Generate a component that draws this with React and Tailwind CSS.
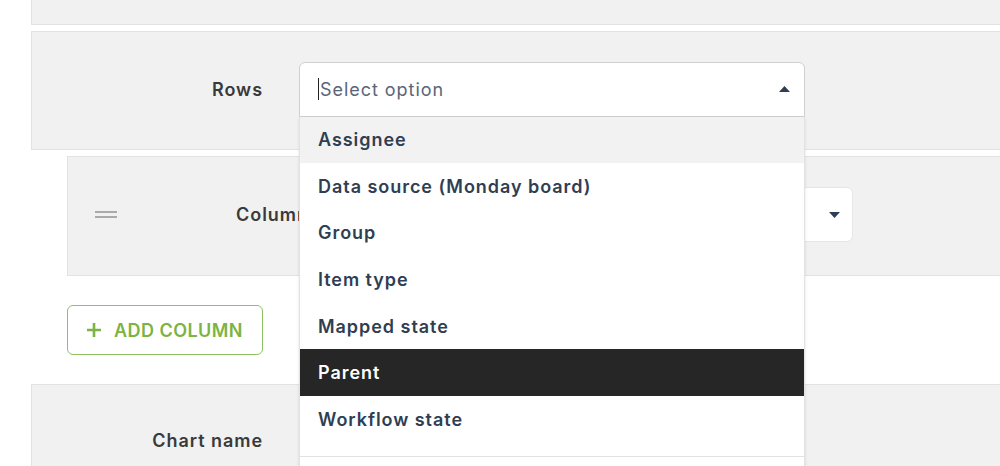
import { useState } from 'react'

const OPTIONS = [
  'Assignee',
  'Data source (Monday board)',
  'Group',
  'Item type',
  'Mapped state',
  'Parent',
  'Workflow state',
]

const font = { fontFamily: 'Inter, "Open Sans", sans-serif' }

function Caret({ up }) {
  return (
    <svg width="11" height="6" viewBox="0 0 11 6" className="text-[#2f3e52]">
      {up ? <path d="M0 6 L5.5 0 L11 6 Z" fill="currentColor" /> : <path d="M0 0 L5.5 6 L11 0 Z" fill="currentColor" />}
    </svg>
  )
}

export default function App() {
  const [hovered] = useState('Parent')

  return (
    <div className="h-[466px] overflow-hidden bg-white pl-[31px] flex flex-col tracking-[0.06em]" style={font}>
      {/* previous section */}
      <div className="h-[25px] shrink-0 bg-[#f1f1f1] border-l border-b border-[#e2e2e2]" />

      {/* Rows */}
      <div className="mt-[6px] h-[119px] shrink-0 bg-[#f1f1f1] border-l border-y border-[#e2e2e2] flex items-center pb-[3px] relative z-10">
        <div className="w-[231px] text-right text-[18px] font-semibold text-[#3a3a3a]">Rows</div>
        <div className="ml-[36px] w-[506px] relative">
          <div className="h-[55px] bg-white border border-[#cfcfcf] rounded-t-md flex items-center pl-[18px] pr-[14px]">
            <span className="w-px h-[22px] bg-[#222] mr-px" />
            <span className="flex-1 text-[18px] text-[#5b6578]">Select option</span>
            <Caret up />
          </div>
          <div className="absolute left-0 top-full w-full bg-white border-x border-[#e2e2e2] shadow-sm">
            {OPTIONS.map((o, i) => (
              <div
                key={o}
                className={`h-[46.6px] flex items-center px-[18px] text-[18px] font-semibold ${
                  o === hovered ? 'bg-[#262626] text-white' : i === 0 ? 'bg-[#f2f2f2] text-[#2f3e52]' : 'text-[#2f3e52]'
                }`}
              >
                {o}
              </div>
            ))}
            <div className="h-[13px]" />
            <div className="h-[20px] border-t border-[#e2e2e2]" />
          </div>
        </div>
      </div>

      {/* Columns */}
      <div className="ml-[36px] mt-[6px] h-[120px] shrink-0 bg-[#f1f1f1] border-l border-y border-[#e2e2e2] flex items-center pb-[3px]">
        <div className="ml-[27px] w-[22px] flex flex-col gap-[3px]">
          <span className="h-[2px] bg-[#aaaaaa]" />
          <span className="h-[2px] bg-[#aaaaaa]" />
        </div>
        <div className="ml-[119px] text-[18px] font-semibold text-[#3a3a3a]">Columns</div>
        <div className="ml-[36px] w-[497px] h-[55px] bg-white rounded-md border border-[#e6e6e6] flex items-center justify-end pr-[12px]">
          <Caret />
        </div>
      </div>

      {/* Add column */}
      <button className="ml-[36px] mt-[29px] w-[196px] h-[50px] shrink-0 rounded-md border border-[#8cc263] flex items-center justify-center gap-[13px] text-[#7cb342] text-[18px] font-semibold tracking-wide">
        <svg width="14" height="14" viewBox="0 0 14 14">
          <path d="M7 0 V14 M0 7 H14" stroke="#7cb342" strokeWidth="2.6" />
        </svg>
        ADD COLUMN
      </button>

      {/* Chart name */}
      <div className="mt-[29px] flex-1 bg-[#f1f1f1] border-l border-t border-[#e2e2e2] flex items-start pt-[42px]">
        <div className="w-[231px] text-right text-[18px] font-semibold text-[#3a3a3a]">Chart name</div>
      </div>
    </div>
  )
}
